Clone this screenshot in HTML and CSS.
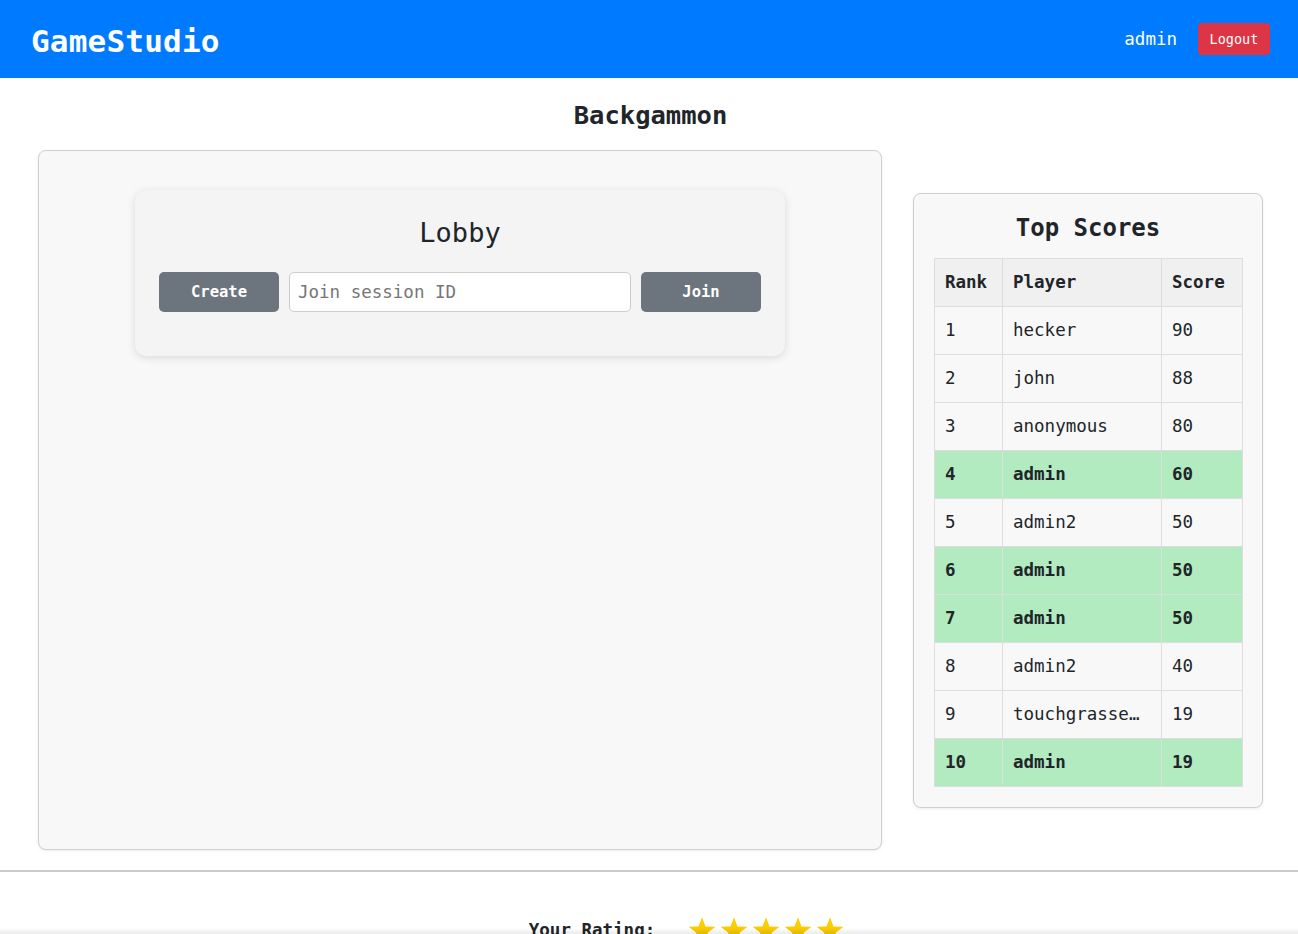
FILE: index.html
```html
<!DOCTYPE html>
<html lang="en">
<head>
<meta charset="utf-8">
<title>GameStudio - Backgammon</title>
<link rel="stylesheet" href="styles.css">
</head>
<body>
<header class="topbar">
  <div class="brand">GameStudio</div>
  <div class="user">
    <span class="username">admin</span>
    <button class="logout">Logout</button>
  </div>
</header>

<main class="main">
  <h1 class="page-title">Backgammon</h1>
  <div class="layout">
    <section class="game-panel">
      <div class="lobby">
        <h2 class="lobby-title">Lobby</h2>
        <div class="lobby-row">
          <button class="btn">Create</button>
          <input class="session-input" type="text" placeholder="Join session ID">
          <button class="btn">Join</button>
        </div>
      </div>
    </section>

    <aside class="scores-panel">
      <h3 class="scores-title">Top Scores</h3>
      <table class="scores">
        <colgroup>
          <col class="c-rank"><col class="c-player"><col class="c-score">
        </colgroup>
        <thead>
          <tr><th>Rank</th><th>Player</th><th>Score</th></tr>
        </thead>
        <tbody>
          <tr><td>1</td><td>hecker</td><td>90</td></tr>
          <tr><td>2</td><td>john</td><td>88</td></tr>
          <tr><td>3</td><td>anonymous</td><td>80</td></tr>
          <tr class="me"><td>4</td><td>admin</td><td>60</td></tr>
          <tr><td>5</td><td>admin2</td><td>50</td></tr>
          <tr class="me"><td>6</td><td>admin</td><td>50</td></tr>
          <tr class="me"><td>7</td><td>admin</td><td>50</td></tr>
          <tr><td>8</td><td>admin2</td><td>40</td></tr>
          <tr><td>9</td><td>touchgrasser123</td><td>19</td></tr>
          <tr class="me"><td>10</td><td>admin</td><td>19</td></tr>
        </tbody>
      </table>
    </aside>
  </div>
</main>

<footer class="rating">
  <div class="rating-row">
    <span class="rating-label">Your Rating:</span>
    <div class="stars">
      <svg class="star" viewBox="0 0 24 24"><defs><linearGradient id="g" x1="0" y1="0" x2="0" y2="1"><stop offset="0" stop-color="#ffd400"/><stop offset="1" stop-color="#f2c200"/></linearGradient></defs><polygon points="12,1 15,9 23.5,9.2 16.8,14.4 19.2,22.8 12,17.8 4.8,22.8 7.2,14.4 0.5,9.2 9,9" fill="url(#g)"/></svg>
      <svg class="star" viewBox="0 0 24 24"><polygon points="12,1 15,9 23.5,9.2 16.8,14.4 19.2,22.8 12,17.8 4.8,22.8 7.2,14.4 0.5,9.2 9,9" fill="url(#g)"/></svg>
      <svg class="star" viewBox="0 0 24 24"><polygon points="12,1 15,9 23.5,9.2 16.8,14.4 19.2,22.8 12,17.8 4.8,22.8 7.2,14.4 0.5,9.2 9,9" fill="url(#g)"/></svg>
      <svg class="star" viewBox="0 0 24 24"><polygon points="12,1 15,9 23.5,9.2 16.8,14.4 19.2,22.8 12,17.8 4.8,22.8 7.2,14.4 0.5,9.2 9,9" fill="url(#g)"/></svg>
      <svg class="star" viewBox="0 0 24 24"><polygon points="12,1 15,9 23.5,9.2 16.8,14.4 19.2,22.8 12,17.8 4.8,22.8 7.2,14.4 0.5,9.2 9,9" fill="url(#g)"/></svg>
    </div>
  </div>
</footer>
<div class="bottom-shade"></div>
</body>
</html>
```

FILE: styles.css
```css
* { box-sizing: border-box; }

html, body {
  margin: 0;
  padding: 0;
  background: #ffffff;
  color: #212529;
  font-family: "DejaVu Sans Mono", "Liberation Mono", monospace;
}

.topbar {
  height: 78px;
  background: #007bff;
  color: #ffffff;
  display: flex;
  align-items: center;
  justify-content: space-between;
  padding: 0 28px 0 31px;
}

.brand {
  font-size: 31px;
  font-weight: bold;
  letter-spacing: 0.2px;
  margin-top: 3px;
}

.user {
  display: flex;
  align-items: center;
  gap: 21px;
}

.username {
  font-size: 17.5px;
}

.logout {
  background: #dc3545;
  color: #ffffff;
  border: none;
  border-radius: 4px;
  font-family: inherit;
  font-size: 13.5px;
  height: 32px;
  width: 72px;
  padding: 0;
}

.main {
  padding: 0 35px 0 38px;
}

.page-title {
  margin: 22px 0 19px;
  text-align: center;
  font-size: 25.5px;
  line-height: 31px;
  font-weight: bold;
}

.layout {
  display: flex;
  align-items: center;
  gap: 31px;
}

.game-panel {
  width: 845px;
  height: 700px;
  background: #f8f8f8;
  border: 1px solid #cfcfcf;
  border-radius: 8px;
  box-shadow: 0 1px 3px rgba(0,0,0,0.08);
  padding-top: 39px;
}

.lobby {
  width: 650px;
  margin: 0 auto;
  background: #f4f4f4;
  border-radius: 12px;
  box-shadow: 0 2px 8px rgba(0,0,0,0.12);
  padding: 26px 24px 44px;
}

.lobby-title {
  margin: 0 0 22px;
  text-align: center;
  font-size: 27px;
  line-height: 34px;
  font-weight: normal;
}

.lobby-row {
  display: flex;
  gap: 10px;
}

.btn {
  width: 120px;
  height: 40px;
  background: #6c757d;
  color: #ffffff;
  border: none;
  border-radius: 5px;
  font-family: inherit;
  font-size: 15.5px;
  font-weight: bold;
  padding: 0;
}

.session-input {
  flex: 1;
  height: 40px;
  border: 1px solid #cccccc;
  border-radius: 5px;
  background: #ffffff;
  font-family: inherit;
  font-size: 17.5px;
  padding: 0 8px;
  color: #212529;
}

.session-input::placeholder {
  color: #767676;
}

.scores-panel {
  width: 350px;
  background: #f8f8f8;
  border: 1px solid #cfcfcf;
  border-radius: 8px;
  box-shadow: 0 1px 3px rgba(0,0,0,0.08);
  padding: 20px;
}

.scores-title {
  margin: 0 0 16px;
  text-align: center;
  font-size: 24px;
  line-height: 28px;
  font-weight: bold;
}

.scores {
  width: 308px;
  border-collapse: collapse;
  table-layout: fixed;
  font-size: 17.5px;
}

.c-rank { width: 68px; }
.c-player { width: 159px; }
.c-score { width: 81px; }

.scores th,
.scores td {
  border: 1px solid #dddddd;
  height: 48px;
  padding: 0 10px;
  text-align: left;
  white-space: nowrap;
  overflow: hidden;
  text-overflow: ellipsis;
}

.scores td:nth-child(2) {
  padding-right: 16px;
}

.scores th {
  background: #f0f0f0;
  font-weight: bold;
}

.scores tr.me td {
  background: #b1ebbf;
  font-weight: bold;
}

.rating {
  margin-top: 20px;
  border-top: 2px solid #cccccc;
  padding-top: 44px;
}

.rating-row {
  display: flex;
  justify-content: center;
  align-items: center;
  gap: 33px;
  padding-left: 75px;
}

.rating-label {
  font-size: 17.5px;
  font-weight: bold;
}

.stars {
  display: flex;
  gap: 4px;
}

.star {
  width: 28px;
  height: 28px;
}

.bottom-shade {
  position: fixed;
  left: 0;
  right: 0;
  bottom: 0;
  height: 6px;
  background: linear-gradient(to bottom, rgba(0,0,0,0), rgba(0,0,0,0.08));
  pointer-events: none;
}
```
